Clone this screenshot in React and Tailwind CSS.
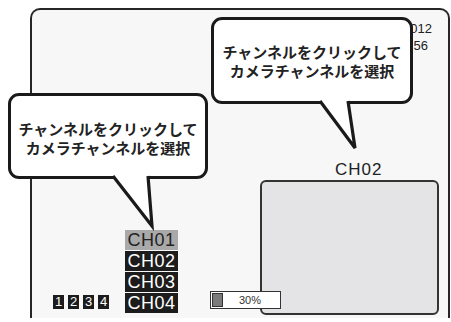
import React from 'react'

const JP = { fontFamily: '"Noto Sans CJK JP", "Noto Sans", sans-serif' }
const SANS = { fontFamily: '"Liberation Sans", Arial, sans-serif' }

const CHANNELS = ['CH01', 'CH02', 'CH03', 'CH04']

// ── Speech bubble ────────────────────────────────────────────────────────────

function Bubble({ className, boxClass, textPad, tail }) {
  return (
    <div className={`absolute ${className}`}>
      <div
        className={`${boxClass} bg-white border-[3px] border-[#1a1a1a] rounded-[11px] text-center text-[15px] leading-[19px] font-bold text-[#222] ${textPad}`}
        style={JP}
      >
        <div>チャンネルをクリックして</div>
        <div>カメラチャンネルを選択</div>
      </div>
      <svg className={`absolute overflow-visible ${tail.pos}`} width="60" height="60">
        <polygon points={tail.fill} fill="#fff" />
        <polyline
          points={tail.line}
          fill="none"
          stroke="#1a1a1a"
          strokeWidth="3.2"
          strokeLinejoin="miter"
        />
      </svg>
    </div>
  )
}

export default function App() {
  return (
    <div className="relative w-[451px] h-[322px] bg-white overflow-hidden" style={SANS}>
      {/* Monitor frame */}
      <div className="pt-[8px] pl-[30px]">
        <div className="relative w-[420px] h-[310px] bg-[#f7f7f7] border-t-2 border-l-2 border-r-2 border-[#262626] rounded-t-[10px] flex flex-col">
          {/* Date / time */}
          <div className="flex justify-end pr-[16px] pt-[10px]">
            <div className="text-[13px] leading-[17px] text-[#222] text-right">
              <div>01/01/2012</div>
              <div className="mr-[4px]">12:34:56</div>
            </div>
          </div>

          <div className="flex-1" />

          {/* Bottom row */}
          <div className="flex items-end">
            <div className="flex gap-[4px] ml-[21px] mb-[9px]">
              {['1', '2', '3', '4'].map(n => (
                <div
                  key={n}
                  className="w-[11px] h-[14px] bg-[#1c1c1c] text-white text-[13px] leading-[14px] text-center"
                >
                  {n}
                </div>
              ))}
            </div>

            <div className="flex flex-col gap-[1px] ml-[16px] mb-[5px] w-[53px]">
              {CHANNELS.map((ch, i) => (
                <div
                  key={ch}
                  className={`h-[20px] text-[18px] leading-[20px] text-center tracking-[0.5px] ${
                    i === 0 ? 'bg-[#a9a9a9] text-[#222]' : 'bg-[#1c1c1c] text-white'
                  }`}
                >
                  {ch}
                </div>
              ))}
            </div>

            <div className="flex flex-col ml-[82px] mb-[3px]">
              <div className="pl-[75px] text-[17px] leading-[20px] tracking-[1px] text-[#222]">CH02</div>
              <div className="w-[179px] h-[135px] bg-[#e4e4e6] border-2 border-[#333] rounded-[6px]" />
            </div>
          </div>

          {/* Progress bar */}
          <div className="absolute left-[178px] top-[281px] w-[71px] h-[18px] bg-white border border-[#333] flex items-center">
            <div className="ml-[1px] w-[11px] h-[14px] bg-[#7a7a7a] border border-[#333]" />
            <div className="ml-[16px] text-[11px] leading-[14px] text-[#333]">30%</div>
          </div>
        </div>
      </div>

      {/* Callouts */}
      <Bubble
        className="left-[8px] top-[93px]"
        boxClass="w-[200px] h-[86px]"
        textPad="pt-[23px]"
        tail={{
          pos: 'left-[100px] top-[80px]',
          fill: '5,3 40,3 44,53',
          line: '5,3 44,53 40,3',
        }}
      />
      <Bubble
        className="left-[211px] top-[17px]"
        boxClass="w-[202px] h-[87px]"
        textPad="pt-[22px]"
        tail={{
          pos: 'left-[100px] top-[82px]',
          fill: '9,2 37,2 44,49',
          line: '9,2 44,49 37,2',
        }}
      />
    </div>
  )
}
